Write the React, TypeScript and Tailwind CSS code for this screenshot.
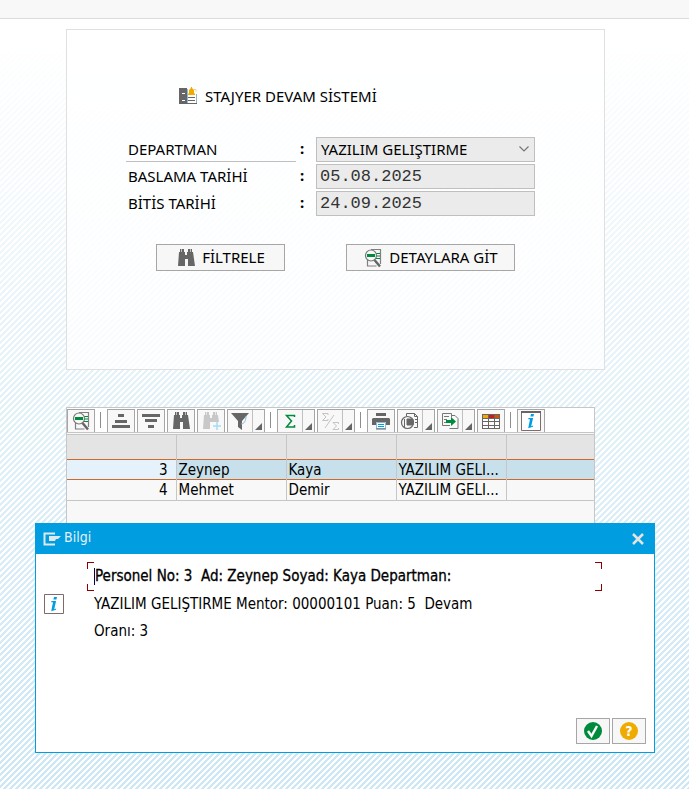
import { useState } from "react";
import type { ReactNode } from "react";

const DARK = "#666666";

function Binoculars({ color = DARK, plus = false }: { color?: string; plus?: boolean }) {
  return (
    <svg width="20" height="20" viewBox="0 0 20 20" aria-hidden="true">
      <path d="M4 1h4v3h1v3h2V4h1V1h4v3h1l2 14h-7v-7H9v7H2L3 4h1z" fill={color} />
      <path d="M5.500 1v3M14.500 1v3" stroke="#f8f8f8" strokeWidth="0.6" />
      {plus && (
        <>
          <path d="M11 11h9v9h-9z" fill="#f8f8f8" />
          <path d="M16 11v8M12 15h8" stroke="#a5dcf5" strokeWidth="1.500" />
        </>
      )}
    </svg>
  );
}

function DetailIcon() {
  return (
    <svg width="20" height="20" viewBox="0 0 20 20" fill="none" aria-hidden="true">
      <path d="M8 1.500h9.500V16M4.500 12v6h9" stroke="#808080" strokeWidth="1.200" />
      <path d="M12 5.500h5M13 8h4M12 10.500h5" stroke="#008a3b" strokeWidth="1.200" />
      <circle cx="8" cy="7.500" r="5.500" fill="#f8f8f8" stroke="#777777" strokeWidth="1.200" />
      <path d="M4 6h8v3H4z" fill="#008a3b" />
      <path d="M11.500 12l5.500 6.500" stroke={DARK} strokeWidth="2.500" />
    </svg>
  );
}

function TitleIcon() {
  return (
    <svg width="18" height="18" viewBox="0 0 18 18" aria-hidden="true">
      <path d="M0 1h8v16H0z" fill={DARK} />
      <path d="M3 6.500h3M3 13.500h3" stroke="#fff" />
      <path d="M8.500 2v14.500h9V7" fill="#fff" stroke="#8fb4d4" />
      <path d="M8 16.500h10" stroke={DARK} />
      <path d="M9 10.500h7M9 13.500h7" stroke={DARK} />
      <path d="M12 0h1v1l2 2v3l1 1v1H9V7l1-1V3l2-2z" fill="#f0ab00" />
      <path d="M15 2.500h2v2" stroke="#f5cf87" fill="none" />
    </svg>
  );
}

function InfoIcon({ header = false }: { header?: boolean }) {
  return (
    <svg width="22" height="22" viewBox="0 0 22 22" aria-hidden="true">
      <path d="M1.500 1.500h19v19h-19z" fill="#fff" stroke="#806b6b" />
      {header && <path d="M1 2h20" stroke={DARK} strokeWidth="2" />}
      <path d="M11 4h3l-.6 2.600h-3zM8.500 8h4.600l-1.900 8.300 2-.8-.3 1.300-4.700 1.400L10 9.300H8.200z" fill="#009de0" />
    </svg>
  );
}

function SortIcon({ down = false }: { down?: boolean }) {
  return (
    <svg width="20" height="20" viewBox="0 0 20 20" aria-hidden="true">
      {down ? (
        <path d="M1 3h18v3H1zM4 8h12v3H4zM7 14h6v3H7z" fill={DARK} />
      ) : (
        <path d="M7 3h6v3H7zM4 9h12v3H4zM1 14h18v3H1z" fill={DARK} />
      )}
    </svg>
  );
}

function FilterIcon() {
  return (
    <svg width="20" height="20" viewBox="0 0 20 20" aria-hidden="true">
      <path d="M1 2h18l-7 8v9l-4-3v-6z" fill={DARK} />
      <path d="M16 5c0 5-2 8-5 8" fill="none" stroke="#8ab8d8" />
    </svg>
  );
}

function SigmaIcon() {
  return (
    <svg width="20" height="20" viewBox="0 0 20 20" fill="none" aria-hidden="true">
      <path d="M14.500 6V4.500h-8l5 5.500-5 6h8V14" stroke="#008a3b" strokeWidth="1.500" />
    </svg>
  );
}

function SubtotalIcon() {
  return (
    <svg width="20" height="20" viewBox="0 0 20 20" fill="none" stroke="#c4c4c4" aria-hidden="true">
      <path d="M8 4V2.500H2.500L6 6 2.500 9.500H8V8M18.500 13v-1.500H13l3.500 3.500-3.500 3.500h5.500V17M14 4L5 17" />
    </svg>
  );
}

function PrinterIcon() {
  return (
    <svg width="20" height="20" viewBox="0 0 20 20" aria-hidden="true">
      <path d="M5 2h10v3H5zM2 7h16l1 1v6h-4v-3H5v3H1V8z" fill={DARK} />
      <path d="M5.500 11.500h9v6h-9z" fill="#fff" stroke="#8ab8d8" />
      <path d="M7 13.500h6M7 15.500h6" stroke="#009de0" />
      <path d="M5 18h10" stroke={DARK} />
    </svg>
  );
}

function ViewsIcon() {
  return (
    <svg width="20" height="20" viewBox="0 0 20 20" fill="none" stroke={DARK} aria-hidden="true">
      <path d="M6.500 5V2.500h8l3 3v11H14M14.500 2.500v3h3M15 8.500h2M15 11.500h2" />
      <circle cx="7.500" cy="11.500" r="6" strokeWidth="1.200" />
      <path d="M4.500 8v8M7 8h6v6H7z" fill={DARK} />
    </svg>
  );
}

function ExportIcon() {
  return (
    <svg width="20" height="20" viewBox="0 0 20 20" fill="none" aria-hidden="true">
      <path d="M10 14.500H2.500v-12h9v4M12 4.500h3l3 3v10H9.500M4 5.500h5M4 8.500h3M4 11.500h2" stroke="#777777" />
      <path d="M6 9h5V6l5 4.500-5 4.500v-3H6z" fill="#008a3b" />
    </svg>
  );
}

function LayoutIcon() {
  return (
    <svg width="20" height="20" viewBox="0 0 20 20" aria-hidden="true">
      <path d="M1 3h18v15H1z" fill={DARK} />
      <path d="M2 4h5v3H2z" fill="#f0ab00" />
      <path d="M8 4h5v3H8z" fill="#cc1919" />
      <path d="M14 4h4v3h-4z" fill="#d25300" />
      <path d="M2 8h5v2H2zM8 8h5v2H8zM14 8h4v2h-4zM2 11h5v3H2zM8 11h5v3H8zM14 11h4v3h-4zM2 15h5v2H2zM8 15h5v2H8zM14 15h4v2h-4z" fill="#fff" />
    </svg>
  );
}

function ToolButton({ label, menu = false, children }: { label: string; menu?: boolean; children: ReactNode }) {
  return (
    <div className="mr-0.5 flex h-[23px] shrink-0 border border-b-0 border-[#a6a6a6] bg-[#f8f8f8]">
      <button
        type="button"
        aria-label={label}
        className={menu ? "flex w-6 items-center justify-center" : "flex w-[26px] items-center justify-center"}
      >
        {children}
      </button>
      {menu && (
        <button
          type="button"
          aria-label={`${label} menu`}
          className="flex w-3 items-end justify-center border-l border-[#c0c0c0] pb-0.5"
        >
          <svg width="7" height="7" viewBox="0 0 7 7" aria-hidden="true">
            <path d="M7 0v7H0z" fill={DARK} />
          </svg>
        </button>
      )}
    </div>
  );
}

function Separator() {
  return <div className="mr-1.5 ml-[3px] h-4 w-px shrink-0 self-center bg-[#8c8c8c]" />;
}

function Toolbar() {
  return (
    <div className="flex h-[25px] items-end border-b border-[#c6c6c6] bg-white">
      <ToolButton label="Details"><DetailIcon /></ToolButton>
      <Separator />
      <ToolButton label="Sort ascending"><SortIcon /></ToolButton>
      <ToolButton label="Sort descending"><SortIcon down /></ToolButton>
      <ToolButton label="Find"><Binoculars /></ToolButton>
      <ToolButton label="Find next"><Binoculars color="#c8c8c8" plus /></ToolButton>
      <ToolButton label="Filter" menu><FilterIcon /></ToolButton>
      <Separator />
      <ToolButton label="Total" menu><SigmaIcon /></ToolButton>
      <ToolButton label="Subtotal" menu><SubtotalIcon /></ToolButton>
      <Separator />
      <ToolButton label="Print"><PrinterIcon /></ToolButton>
      <ToolButton label="Views" menu><ViewsIcon /></ToolButton>
      <ToolButton label="Export" menu><ExportIcon /></ToolButton>
      <ToolButton label="Layout"><LayoutIcon /></ToolButton>
      <Separator />
      <ToolButton label="Information"><InfoIcon header /></ToolButton>
    </div>
  );
}

const rows = [
  { no: 3, name: "Zeynep", surname: "Kaya", department: "YAZILIM GELI..." },
  { no: 4, name: "Mehmet", surname: "Demir", department: "YAZILIM GELI..." },
];

function Grid() {
  const [selected, setSelected] = useState(3);
  return (
    <section className="mt-[37px] mr-[94px] ml-[66px] h-[150px] border border-[#c6c6c6] bg-[#f8f8f8] font-['DejaVu_Sans_Condensed','DejaVu_Sans',sans-serif]">
      <Toolbar />
      <table className="mt-px w-full table-fixed border-collapse border-t border-[#c6c6c6] whitespace-nowrap">
        <thead>
          <tr className="h-[25px] bg-[#e4e4e4]">
            <th className="w-[109px] border-r border-[#c6c6c6]" />
            <th className="w-[110px] border-r border-[#c6c6c6]" />
            <th className="w-[110px] border-r border-[#c6c6c6]" />
            <th className="w-[110px] border-r border-[#c6c6c6]" />
            <th />
          </tr>
        </thead>
        <tbody>
          {rows.map((row) => {
            const active = row.no === selected;
            return (
              <tr
                key={row.no}
                onClick={() => setSelected(row.no)}
                className={
                  active
                    ? "h-5 border-y border-[#cc6a2c] bg-[#c8e0ec] leading-4"
                    : "h-[21px] border-b border-[#c6c6c6] leading-4"
                }
              >
                <td className={active ? "border-r border-r-[#c6c6c6] bg-[#e5f2fb] pr-2 text-right" : "border-r border-r-[#c6c6c6] pr-2 text-right"}>
                  {row.no}
                </td>
                <td className="border-r border-r-[#c6c6c6] pl-0.5">{row.name}</td>
                <td className="border-r border-r-[#c6c6c6] pl-0.5">{row.surname}</td>
                <td className="overflow-hidden border-r border-r-[#c6c6c6] pl-0.5">{row.department}</td>
                <td />
              </tr>
            );
          })}
        </tbody>
      </table>
    </section>
  );
}

function Filters() {
  return (
    <form
      onSubmit={(e) => e.preventDefault()}
      className="mt-2.5 mr-[84px] ml-[66px] h-[341px] border border-[#e0e0e0] bg-white/75"
    >
      <h1 className="mt-14 ml-28 flex h-5 items-center gap-2">
        <TitleIcon />
        STAJYER DEVAM SİSTEMİ
      </h1>
      <div className="mt-[31px] mr-[69px] ml-[59px] grid grid-cols-[170px_20px_1fr] gap-y-0.5">
        <label htmlFor="department" className="flex h-[25px] items-center border-b border-[#bfbfbf] pl-0.5">DEPARTMAN</label>
        <span className="pl-1 font-bold">:</span>
        <div className="relative">
          <select id="department" className="h-[25px] w-full appearance-none border border-[#bfbfbf] bg-[#ebebeb] pl-1">
            <option>YAZILIM GELIŞTIRME</option>
          </select>
          <svg className="pointer-events-none absolute top-2 right-1.5" width="10" height="8" viewBox="0 0 10 8" aria-hidden="true">
            <path d="M.5 1.500L5 6l4.500-4.500" fill="none" stroke="#777777" strokeWidth="1.200" />
          </svg>
        </div>
        <label htmlFor="start" className="flex h-[25px] items-center pl-0.5">BASLAMA TARİHİ</label>
        <span className="pl-1 font-bold">:</span>
        <input id="start" defaultValue="05.08.2025" className="h-[25px] w-full border border-[#bfbfbf] bg-[#ebebeb] pl-[3px] font-['Liberation_Mono',monospace] text-[17px] text-[#333333]" />
        <label htmlFor="end" className="flex h-[25px] items-center pl-0.5">BİTİS TARİHİ</label>
        <span className="pl-1 font-bold">:</span>
        <input id="end" defaultValue="24.09.2025" className="h-[25px] w-full border border-[#bfbfbf] bg-[#ebebeb] pl-[3px] font-['Liberation_Mono',monospace] text-[17px] text-[#333333]" />
      </div>
      <div className="mt-7 ml-[89px] flex gap-[61px] whitespace-nowrap">
        <button type="submit" className="flex h-[27px] w-[129px] items-center justify-center gap-1.5 border border-[#a6a6a6] bg-[#f7f7f7]">
          <Binoculars />
          FİLTRELE
        </button>
        <button type="button" className="flex h-[27px] w-[169px] items-center justify-center gap-1.5 border border-[#a6a6a6] bg-[#f7f7f7]">
          <DetailIcon />
          DETAYLARA GİT
        </button>
      </div>
    </form>
  );
}

function InfoDialog() {
  return (
    <div
      role="dialog"
      aria-labelledby="dialog-title"
      className="absolute top-[523px] right-[34px] left-[35px] flex h-[230px] flex-col border border-[#009de0] bg-white font-['DejaVu_Sans_Condensed','DejaVu_Sans',sans-serif]"
    >
      <header className="flex h-[30px] shrink-0 items-center bg-[#009de0] pr-2.5 pl-[7px] text-[#e6f0f5]">
        <svg width="18" height="14" viewBox="0 0 18 14" aria-hidden="true">
          <path d="M12 1.500H1.500v11H12" fill="none" stroke="#dfe8ec" strokeWidth="2" />
          <path d="M6 4h12l-3 3h-2l-1 2H6z" fill="#dfe8ec" />
        </svg>
        <h2 id="dialog-title" className="ml-[3px] flex-1 pb-1 text-sm">Bilgi</h2>
        <button type="button" aria-label="Close">
          <svg width="12" height="12" viewBox="0 0 12 12" aria-hidden="true">
            <path d="M1 1l10 10M11 1L1 11" stroke="#e3e3e3" strokeWidth="2.500" />
          </svg>
        </button>
      </header>
      <div className="flex flex-1 gap-[22px] pt-2 pr-[52px] pl-[7px]">
        <div className="pt-[31px]"><InfoIcon /></div>
        <div className="flex-1">
          <div className="flex h-[29px] justify-between">
            <span className="flex flex-col justify-between">
              <i className="size-[7px] border-t border-l border-[#8b0000]" />
              <i className="size-[7px] border-b border-l border-[#8b0000]" />
            </span>
            <p className="my-1.5 flex-1 border-l border-[#000060] leading-[17px] [-webkit-text-stroke:0.3px_black]">
              Personel No: 3&nbsp; Ad: Zeynep Soyad: Kaya Departman:
            </p>
            <span className="flex flex-col justify-between">
              <i className="size-[7px] border-t border-r border-[#8b0000]" />
              <i className="size-[7px] border-r border-b border-[#8b0000]" />
            </span>
          </div>
          <p className="pl-[7px] leading-[27px]">
            YAZILIM GELIŞTIRME Mentor: 00000101 Puan: 5&nbsp; Devam
            <br />
            Oranı: 3
          </p>
        </div>
      </div>
      <footer className="flex justify-end gap-0.5 pr-2 pb-2">
        <button type="button" aria-label="Continue" className="flex h-[26px] w-[34px] items-center justify-center border border-[#a6a6a6] bg-[#f7f7f7]">
          <svg width="18" height="18" viewBox="0 0 18 18" aria-hidden="true">
            <circle cx="9" cy="9" r="9" fill="#008a3b" />
            <path d="M4 9l3.500 5L13 4" fill="none" stroke="#fff" strokeWidth="2.400" />
          </svg>
        </button>
        <button type="button" aria-label="Help" className="flex h-[26px] w-[34px] items-center justify-center border border-[#a6a6a6] bg-[#f7f7f7]">
          <span className="flex size-[18px] items-center justify-center rounded-full bg-[#f0ab00] text-sm font-bold text-white">?</span>
        </button>
      </footer>
    </div>
  );
}

export default function App() {
  return (
    <main className="relative min-h-screen bg-white bg-[linear-gradient(to_bottom,#ffffff_40px,rgba(255,255,255,0.4)_420px,rgba(255,255,255,0)_780px),linear-gradient(135deg,#cce7f5_25%,#ffffff_25%,#ffffff_50%,#cce7f5_50%,#cce7f5_75%,#ffffff_75%)] bg-[size:auto,6px_6px] font-['Noto_Sans','DejaVu_Sans',sans-serif] text-[15px] text-black">
      <div className="h-[19px] border-b border-[#dcdcdc] bg-[#f8f8f8]" />
      <Filters />
      <Grid />
      <InfoDialog />
    </main>
  );
}
